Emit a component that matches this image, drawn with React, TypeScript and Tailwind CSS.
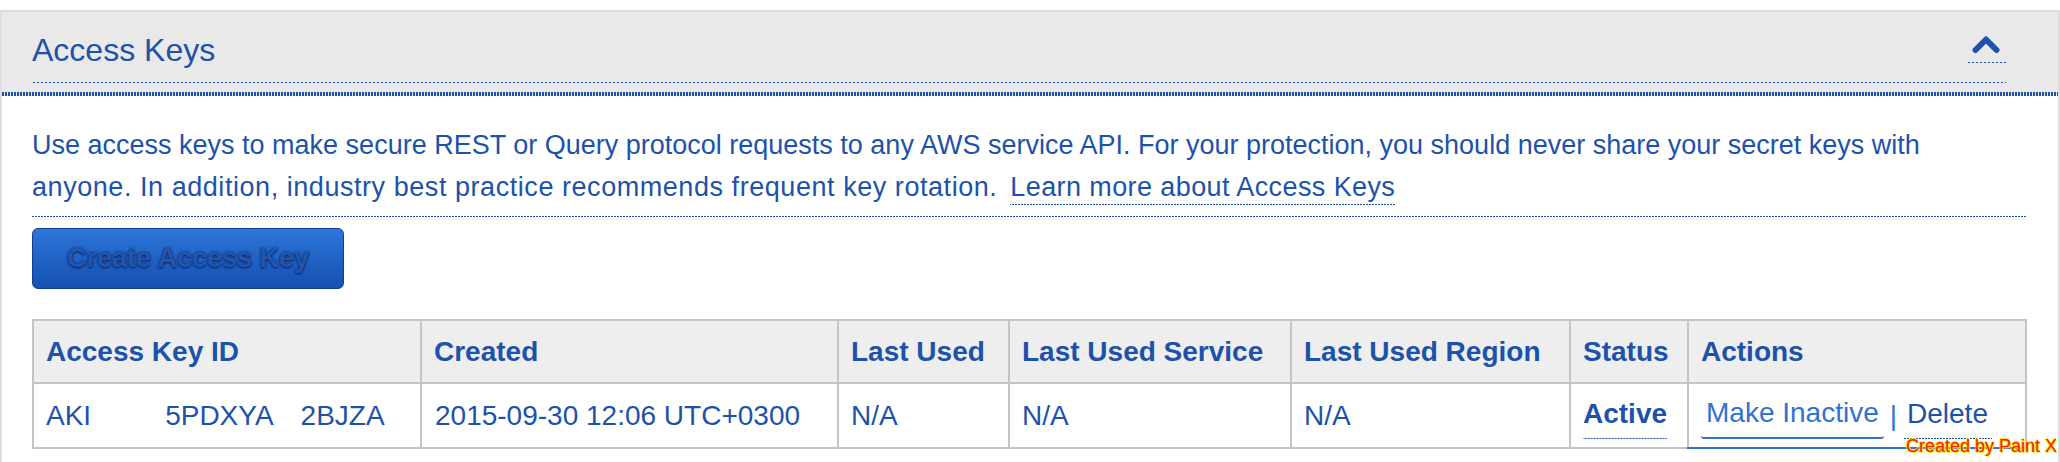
import React from 'react';

const columns = [
    { title: 'Access Key ID', width: 'w-[388px]' },
    { title: 'Created', width: 'w-[417px]' },
    { title: 'Last Used', width: 'w-[171px]' },
    { title: 'Last Used Service', width: 'w-[282px]' },
    { title: 'Last Used Region', width: 'w-[279px]' },
    { title: 'Status', width: 'w-[118px]' },
    { title: 'Actions', width: 'w-[338px]' },
];

// dotted rules, drawn as repeating gradients so the dot rhythm matches
const dotsFine = "[background-image:linear-gradient(to_right,#1c52ab_2px,transparent_2px)] [background-size:3px_1px] bg-repeat-x bg-bottom";
const dotsWide = "[background-image:linear-gradient(to_right,#1c52ab_2px,transparent_2px)] [background-size:4px_1px] bg-repeat-x bg-bottom";

const ChevronUp = () => (
    <svg width="28" height="19" viewBox="0 0 28 19" fill="none">
        <polyline points="3.5,15 14,4.5 24.5,15" stroke="#1c52ab" strokeWidth="6" strokeLinecap="round" strokeLinejoin="round" />
    </svg>
);

// key id is partly blanked out in the screenshot
const KeyId = () => (
    <span className="flex items-center whitespace-nowrap">
        <span>AKI</span>
        <span className="inline-block w-[74px]" />
        <span>5PDXYA</span>
        <span className="inline-block w-[27px]" />
        <span>2BJZA</span>
    </span>
);

const App = () => {
    return (
        <div className="relative w-[2060px] h-[462px] overflow-hidden bg-white pt-[10px] font-['Liberation_Sans',Arial,sans-serif] text-[#1c52ab]">
            <section className="border-2 border-b-0 border-[#dedede] h-[460px]">
                {/* header */}
                <div className="bg-[#e9e9e9]">
                    <div className="pt-[22px] pl-[30px] pr-[52px] pb-[9px]">
                        <div className={`flex justify-between items-start pb-[17px] ${dotsWide}`}>
                            <h2 className="text-[32px] leading-[32px] font-normal">Access Keys</h2>
                            <button className={`w-[40px] h-[29px] flex justify-center items-start pt-[1px] ${dotsWide}`}>
                                <ChevronUp />
                            </button>
                        </div>
                    </div>
                    <div className="h-[4px] [background-image:linear-gradient(to_right,#1c52ab_2px,transparent_2px)] [background-size:3px_4px] bg-repeat-x" />
                </div>

                {/* body */}
                <div className="pt-[28px] pl-[30px] pr-[31px]">
                    <div className={`pb-[9px] ${dotsFine}`}>
                        <p className="text-[27px] leading-[42px]">
                            Use access keys to make secure REST or Query protocol requests to any AWS service API. For your protection, you should never share your secret keys with
                            <br />
                            <span className="tracking-[0.55px]">anyone. In addition, industry best practice recommends frequent key rotation.</span>
                            <a className={`ml-[13px] pb-[3px] tracking-[0.4px] ${dotsFine}`}>Learn more about Access Keys</a>
                        </p>
                    </div>

                    <button className="mt-[11px] w-[312px] h-[61px] rounded-[6px] border border-[#0f3f94] bg-gradient-to-b from-[#2d76da] to-[#1550b2] text-[27px] font-bold text-[#2455aa] [text-shadow:0_1px_2px_#082a6b,0_0_3px_#0b2f78]">
                        Create Access Key
                    </button>

                    {/* keys table */}
                    <div className="mt-[30px] border-l-2 border-t-2 border-[#c4c4c4] w-fit text-[28px]">
                        <div className="flex bg-[#eeeeee]">
                            {columns.map((col) => (
                                <div key={col.title} className={`${col.width} h-[63px] flex items-center pl-[12px] font-bold border-r-2 border-b-2 border-[#c4c4c4] whitespace-nowrap`}>
                                    {col.title}
                                </div>
                            ))}
                        </div>
                        <div className="flex bg-white">
                            <div className="w-[388px] h-[65px] flex items-center pl-[12px] border-r-2 border-b-2 border-[#c4c4c4]">
                                <KeyId />
                            </div>
                            <div className="w-[417px] h-[65px] flex items-center pl-[13px] border-r-2 border-b-2 border-[#c4c4c4] whitespace-nowrap">2015-09-30 12:06 UTC+0300</div>
                            <div className="w-[171px] h-[65px] flex items-center pl-[12px] border-r-2 border-b-2 border-[#c4c4c4]">N/A</div>
                            <div className="w-[282px] h-[65px] flex items-center pl-[12px] border-r-2 border-b-2 border-[#c4c4c4]">N/A</div>
                            <div className="w-[279px] h-[65px] flex items-center pl-[12px] border-r-2 border-b-2 border-[#c4c4c4]">N/A</div>
                            <div className="w-[118px] h-[65px] flex items-center pl-[12px] border-r-2 border-b-2 border-[#c4c4c4]">
                                <span className={`font-bold pb-[4px] ${dotsFine}`}>Active</span>
                            </div>
                            <div className="-ml-[2px] w-[340px] h-[65px] flex items-center pl-[12px] border-r-2 border-b-2 border-r-[#c4c4c4] border-b-[#2e72d2] whitespace-nowrap">
                                <span className="ml-[2px] px-[5px] pb-[3px] border-b-2 border-[#2e72d2] rounded-[3px] text-[#2e72d2]">Make Inactive</span>
                                <span className="mx-[6px] text-[#2e72d2]">|</span>
                                <span className={`px-[4px] pb-[4px] ${dotsFine}`}>Delete</span>
                            </div>
                        </div>
                    </div>
                </div>
            </section>

            {/* screenshot tool watermark */}
            <span className="absolute left-[1906px] top-[437px] text-[18px] leading-[18px] text-[#f42000] whitespace-nowrap [text-shadow:1px_1px_0_#ffe600,-1px_0_0_#ffe600,0_-1px_0_#ffe600]">
                Created by Paint X
            </span>
        </div>
    );
};

export default App;
